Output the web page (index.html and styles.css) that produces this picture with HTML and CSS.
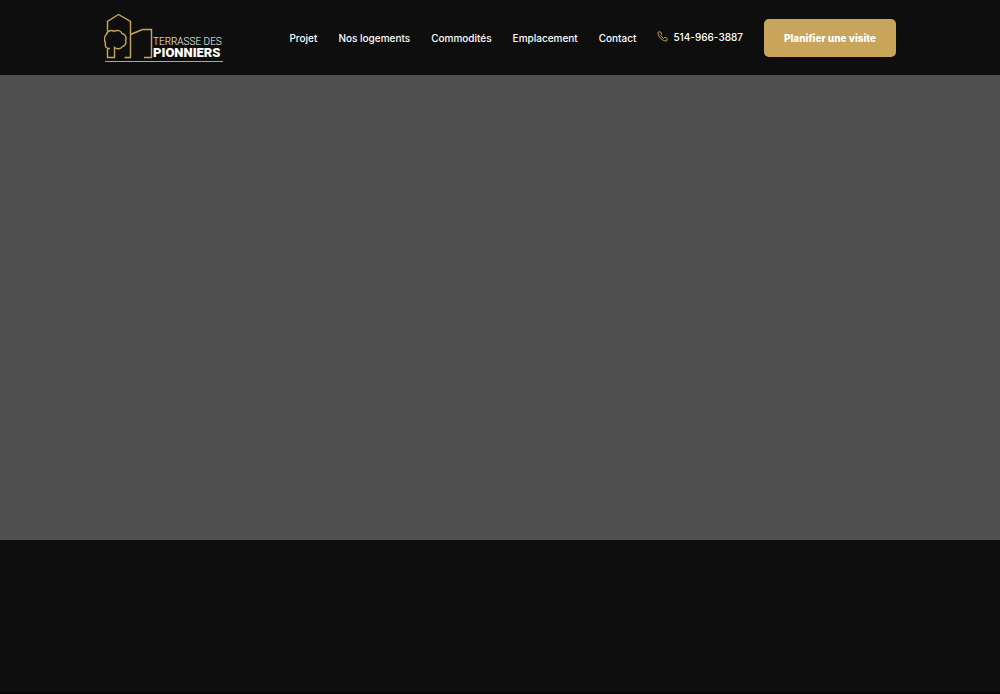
FILE: index.html
```
<!DOCTYPE html>
<html lang="fr">
<head>
    <meta charset="UTF-8">
    <meta name="viewport" content="width=device-width, initial-scale=1.0">
    <title>Terrasse des Pionniers</title>
    <link rel="stylesheet" href="styles.css">
</head>
<body>
    <header class="header">
        <a class="logo" href="#" aria-label="Terrasse des Pionniers">
            <svg width="120" height="50" viewBox="0 0 120 50">
                <g class="logo-lines">
                    <path d="M3.5 18V8.500L14.500 1.500L26.500 8.500V44.500H20.500" />
                    <path d="M26.500 21.500L38.500 16.500H47.500V44.500H40" />
                    <path d="M6 35.500C2.500 36 .5 33 1.500 30C0 27 0 23 2.500 21.500C3 17.500 8 16.500 10 18.500C13 16.500 17 17.500 18 20.500C21.500 21 23 25 21.500 27C23 30 20.500 33.500 18.500 33.500C17 36 13 36.500 10.500 34.500V44.500H3.500V35.500" />
                </g>
                <path class="logo-rule" d="M1 48.500H119" />
                <text class="logo-top" x="49" y="32">TERRASSE DES</text>
                <text class="logo-name" x="49" y="44">PIONNIERS</text>
            </svg>
        </a>
        <nav class="nav">
            <a href="#projet">Projet</a>
            <a href="#logements">Nos logements</a>
            <a href="#commodites">Commodités</a>
            <a href="#emplacement">Emplacement</a>
            <a href="#contact">Contact</a>
            <a class="phone" href="tel:5149663887">
                <svg width="11" height="11" viewBox="0 0 24 24">
                    <path d="M22 16.920v3a2 2 0 0 1-2.180 2 19.790 19.790 0 0 1-8.630-3.070 19.500 19.500 0 0 1-6-6 19.790 19.790 0 0 1-3.070-8.670A2 2 0 0 1 4.110 2h3a2 2 0 0 1 2 1.720c.13.960.36 1.900.7 2.810a2 2 0 0 1-.45 2.110L8.090 9.910a16 16 0 0 0 6 6l1.270-1.270a2 2 0 0 1 2.110-.45c.91.34 1.850.57 2.810.7A2 2 0 0 1 22 16.920z" />
                </svg>
                <span>514-966-3887</span>
            </a>
            <button class="visit" type="button">Planifier une visite</button>
        </nav>
    </header>
    <main class="hero"></main>
</body>
</html>
```
FILE: styles.css
```
body {
    box-sizing: border-box;
    margin: 0;
    min-height: 100vh;
    border-bottom: 2px solid #050305;
    background-color: #0e0e0e;
    color: white;
    font-family: Inter, sans-serif;
    font-size: 10px;
    font-weight: 500;
    line-height: 16px;
}
.header {
    display: flex;
    justify-content: space-between;
    align-items: center;
    height: 75px;
    padding: 0 104px;
}
.logo svg {
    display: block;
}
.logo-lines {
    fill: none;
    stroke: #caa65a;
    stroke-width: 1.4;
}
.logo-rule {
    stroke: #a8a8a8;
}
.logo-top,
.logo-name {
    fill: white;
    font-family: Roboto, sans-serif;
}
.logo-top {
    font-size: 10px;
    font-weight: 300;
}
.logo-name {
    font-size: 13px;
    font-weight: 900;
}
.nav {
    display: flex;
    align-items: center;
    gap: 21px;
}
.nav a {
    color: white;
    text-decoration: none;
    white-space: nowrap;
}
.nav .phone {
    display: flex;
    align-items: center;
    gap: 5px;
    padding-bottom: 2px;
}
.phone svg {
    fill: none;
    stroke: #caa65a;
    stroke-width: 2;
}
.visit {
    padding: 11px 20px;
    border: none;
    border-radius: 5px;
    background: #c9a55c;
    color: white;
    font: 800 10px/16px Inter, sans-serif;
    white-space: nowrap;
    cursor: pointer;
}
.hero {
    height: 67vh;
    background: #505050;
}
```
